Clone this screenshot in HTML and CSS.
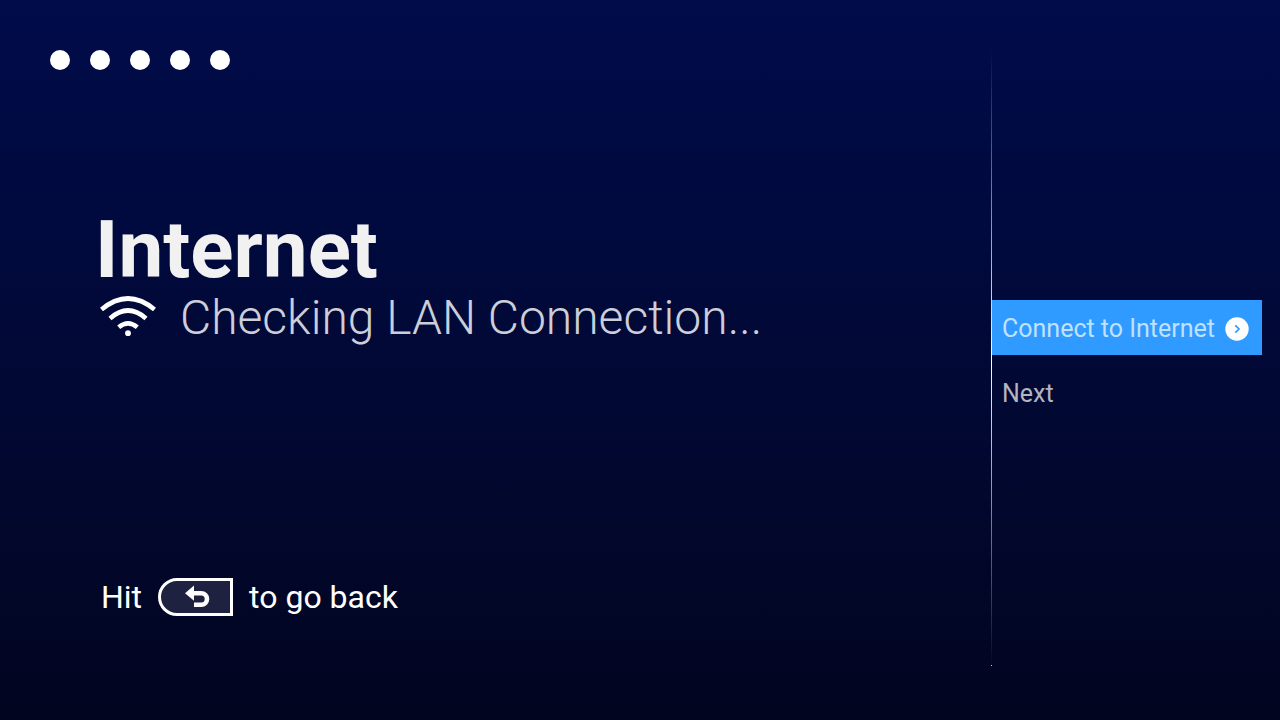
FILE: index.html
```html
<!DOCTYPE html>
<html lang="en">
<head>
  <meta charset="UTF-8">
  <meta name="viewport" content="width=device-width, initial-scale=1.0">
  <title>Internet</title>
  <link rel="stylesheet" href="styles.css">
</head>
<body>
  <main class="content">
    <div class="steps">
      <span class="dot"></span>
      <span class="dot"></span>
      <span class="dot"></span>
      <span class="dot"></span>
      <span class="dot"></span>
    </div>

    <section class="info">
      <h1>Internet</h1>
      <div class="status">
        <svg class="wifi" viewBox="0 0 56 44" aria-hidden="true">
          <path d="M1.5 13.5 Q28 -8.5 54.5 13.5"/>
          <path d="M10 22.4 Q28 6.6 46 22.4"/>
          <path d="M18.7 31.2 Q28 23.4 37.3 31.2"/>
          <circle cx="28" cy="37.2" r="2.9"/>
        </svg>
        <p>Checking LAN Connection...</p>
      </div>
    </section>

    <footer class="hint">
      <span>Hit</span>
      <svg class="back-key" viewBox="0 0 75 38" role="img" aria-label="Back">
        <path class="key" d="M73.5 1.5 H19 A17.5 17.5 0 0 0 19 36.5 H73.5 Z"/>
        <path class="arrow-head" d="M27 15.2 L36 7.5 V22.7 Z"/>
        <path class="arrow-line" d="M35 15.2 H43.2 A5.8 5.8 0 0 1 43.2 26.8 H36"/>
      </svg>
      <span>to go back</span>
    </footer>
  </main>

  <div class="divider"></div>

  <nav class="menu">
    <button class="item active" type="button">
      Connect to Internet
      <svg class="go" viewBox="0 0 24 24" aria-hidden="true">
        <circle cx="12" cy="12" r="11.7"/>
        <path d="M10.3 8.3 L14 12 L10.3 15.7"/>
      </svg>
    </button>
    <button class="item" type="button">Next</button>
  </nav>
</body>
</html>
```
FILE: styles.css
```css
* {
  box-sizing: border-box;
}
body {
  display: flex;
  min-height: 100vh;
  margin: 0;
  background: linear-gradient(#000c4b, #020520);
  color: #fff;
  font-family: Roboto, sans-serif;
}
.content {
  flex: 1;
  display: flex;
  flex-direction: column;
  padding: 50px 0 104px 50px;
}
.steps {
  display: flex;
  gap: 20px;
}
.dot {
  width: 20px;
  height: 20px;
  border-radius: 50%;
  background-color: #fff;
}
.info {
  margin-top: 140px;
  padding-left: 45px;
}
h1 {
  margin: 0;
  color: #f1f1f1;
  font-size: 80px;
  line-height: 80px;
  font-weight: bold;
}
.status {
  display: flex;
  align-items: center;
  gap: 24px;
  padding-left: 5px;
}
.status p {
  margin: 0;
  color: #ccceda;
  font-size: 48px;
  line-height: 56px;
  font-weight: 300;
}
.wifi {
  width: 56px;
  height: 44px;
  fill: none;
  stroke: #fff;
  stroke-width: 4.6;
}
.wifi circle {
  fill: #fff;
  stroke: none;
}
.hint {
  display: flex;
  align-items: center;
  gap: 16px;
  margin-top: auto;
  padding-left: 51px;
  font-size: 32px;
  line-height: 38px;
}
.back-key {
  width: 75px;
  height: 38px;
}
.key {
  fill: #1f2140;
  stroke: #fff;
  stroke-width: 3;
}
.arrow-head {
  fill: #fff;
}
.arrow-line {
  fill: none;
  stroke: #fff;
  stroke-width: 4.6;
}

/* vertical line fading out at both ends, closed by a small dot */
.divider {
  display: flex;
  flex-direction: column;
  width: 1px;
  margin: 50px 0 54px;
  background: linear-gradient(rgba(255, 255, 255, 0), #fff 50%, rgba(255, 255, 255, 0));
}
.divider::after {
  content: "";
  height: 1px;
  margin-top: auto;
  background-color: #c4c6d2;
}
.menu {
  display: flex;
  flex-direction: column;
  justify-content: center;
  gap: 10px;
  width: 288px;
  padding-right: 18px;
}
.item {
  display: flex;
  align-items: center;
  gap: 10px;
  height: 55px;
  padding: 2px 10px 0;
  border: none;
  background: none;
  color: #b3b4c0;
  font-family: inherit;
  font-size: 25px;
  white-space: nowrap;
}
.active {
  background-color: #2f9aff;
  color: #c0e1ff;
}
.go {
  flex: none;
  width: 24px;
  height: 24px;
  fill: #fff;
}
.go path {
  fill: none;
  stroke: #2f9aff;
  stroke-width: 1.7;
}
```
